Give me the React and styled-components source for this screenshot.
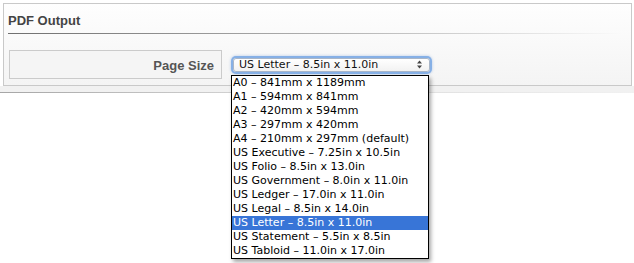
import styled, { createGlobalStyle } from "styled-components";

const sizes = [
  "A0 – 841mm x 1189mm",
  "A1 – 594mm x 841mm",
  "A2 – 420mm x 594mm",
  "A3 – 297mm x 420mm",
  "A4 – 210mm x 297mm (default)",
  "US Executive – 7.25in x 10.5in",
  "US Folio – 8.5in x 13.0in",
  "US Government – 8.0in x 11.0in",
  "US Ledger – 17.0in x 11.0in",
  "US Legal – 8.5in x 14.0in",
  "US Letter – 8.5in x 11.0in",
  "US Statement – 5.5in x 8.5in",
  "US Tabloid – 11.0in x 17.0in",
];

const selected = "US Letter – 8.5in x 11.0in";

export default function App() {
  return (
    <>
      <GlobalStyle />
      <Page>
        <Panel>
          <Heading>PDF Output</Heading>
          <FieldRow>
            <Label>Page Size</Label>
            <SelectBox>
              <span>{selected}</span>
              <Arrows width="7" height="9" viewBox="0 0 7 9">
                <path d="M3.5 0.5 L6 3.5 H1 Z" fill="#444" />
                <path d="M3.5 8.5 L6 5.5 H1 Z" fill="#444" />
              </Arrows>
              <Menu>
                {sizes.map((s) => (
                  <Option key={s} $active={s === selected}>
                    {s}
                  </Option>
                ))}
              </Menu>
            </SelectBox>
          </FieldRow>
        </Panel>
        <Band />
      </Page>
    </>
  );
}

const GlobalStyle = createGlobalStyle`
  html, body {
    margin: 0;
    background: #fff;
  }
  body {
    font-family: "Liberation Sans", Arial, sans-serif;
  }
`;

const Page = styled.div`
  width: 634px;
  height: 263px;
  padding: 3px 2px 0 3px;
  box-sizing: border-box;
`;

const Panel = styled.div`
  height: 83px;
  box-sizing: border-box;
  border: 1px solid #c9c9c9;
  background: linear-gradient(#fefefe, #f4f4f4);
  padding: 9px 10px 0 4px;
`;

const Heading = styled.div`
  font-size: 13px;
  line-height: 16px;
  font-weight: bold;
  color: #444;
  padding-bottom: 4px;
  border-bottom: 1px solid;
  border-image: linear-gradient(to right, #6f6f6f, #b5b5b5 55%, rgba(230, 230, 230, 0)) 1;
`;

const FieldRow = styled.div`
  display: flex;
  align-items: center;
  margin-top: 16px;
  padding-left: 1px;
`;

const Label = styled.div`
  width: 213px;
  height: 29px;
  box-sizing: border-box;
  border: 1px solid #cbcbcb;
  background: #f5f5f5;
  display: flex;
  align-items: center;
  justify-content: flex-end;
  padding: 1px 7px 0 0;
  font-size: 13px;
  font-weight: bold;
  color: #555;
`;

const SelectBox = styled.div`
  position: relative;
  margin-left: 11px;
  width: 197px;
  height: 14px;
  box-sizing: border-box;
  border: 1px solid #a9b6c8;
  border-radius: 3px;
  background: linear-gradient(#ffffff, #f2f2f2);
  box-shadow: 0 0 0 2px #86b0e6, 0 0 3px 2px rgba(90, 140, 210, 0.45);
  display: flex;
  align-items: center;
  justify-content: space-between;
  padding: 0 6px 0 5px;
  font-family: "DejaVu Sans", Verdana, sans-serif;
  font-size: 11px;
  line-height: 14px;
  color: #111;
`;

const Arrows = styled.svg`
  display: block;
`;

const Menu = styled.div`
  position: absolute;
  top: 16px;
  left: -3px;
  width: 198px;
  box-sizing: border-box;
  border: 1px solid #000;
  background: #fff;
  box-shadow: 2px 3px 4px rgba(0, 0, 0, 0.35);
  z-index: 2;
`;

const Option = styled.div`
  height: 14px;
  line-height: 14px;
  padding-left: 1px;
  white-space: nowrap;
  color: ${(p) => (p.$active ? "#fff" : "#000")};
  background: ${(p) => (p.$active ? "#3875d7" : "transparent")};
`;

const Band = styled.div`
  height: 6px;
  margin: 0 -2px 0 -3px;
  background: #f1f1f1;
  border-bottom: 1px solid;
  border-image: linear-gradient(to right, #a6a6a6, #d4d4d4 40%, rgba(240, 240, 240, 0)) 1;
`;
